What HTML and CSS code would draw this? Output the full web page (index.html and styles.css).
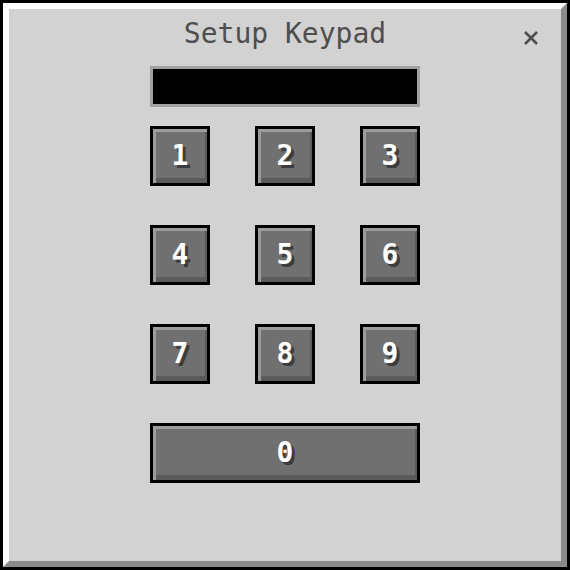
FILE: index.html
```html
<!DOCTYPE html>
<html lang="en">

<head>
    <meta charset="UTF-8">
    <meta name="viewport" content="width=device-width, initial-scale=1.0">
    <title>Setup Keypad</title>
    <link rel="stylesheet" href="styles.css">
</head>

<body>
    <div class="window">
        <div class="frame">
            <div class="header">
                <span></span>
                <h1 class="title">Setup Keypad</h1>
                <button class="close" aria-label="Close">
                    <svg width="16" height="16" viewBox="0 0 16 16">
                        <path d="M2 2 L14 14 M14 2 L2 14" stroke="#4e4e4e" stroke-width="2.6" fill="none" />
                    </svg>
                </button>
            </div>
            <div class="display"></div>
            <div class="keys">
                <button class="key">1</button>
                <button class="key">2</button>
                <button class="key">3</button>
                <button class="key">4</button>
                <button class="key">5</button>
                <button class="key">6</button>
                <button class="key">7</button>
                <button class="key">8</button>
                <button class="key">9</button>
                <button class="key wide">0</button>
            </div>
        </div>
    </div>
</body>

</html>
```

FILE: styles.css
```css
* {
    padding: 0;
    margin: 0;
    box-sizing: border-box;
}

html,
body {
    width: 100%;
    height: 100%;
    background: #fff;
}

.window {
    width: 570px;
    height: 570px;
    border: 3px solid #000;
}

.frame {
    height: 100%;
    display: flex;
    flex-direction: column;
    align-items: center;
    background-color: #d2d2d2;
    border-top: 6px solid #fff;
    border-left: 6px solid #fff;
    border-right: 6px solid #8b8b8b;
    border-bottom: 6px solid #8b8b8b;
}

.header {
    width: 100%;
    height: 57px;
    display: grid;
    grid-template-columns: 1fr auto 1fr;
    align-items: start;
    padding-top: 9px;
}

.title {
    font-family: "DejaVu Sans Mono", "Liberation Mono", monospace;
    font-weight: normal;
    font-size: 28px;
    line-height: 32px;
    color: #4e4e4e;
}

.close {
    justify-self: end;
    margin-right: 22px;
    margin-top: 12px;
    width: 16px;
    height: 16px;
    border: none;
    background: none;
    display: flex;
}

.display {
    width: 270px;
    height: 41px;
    background-color: #000;
    border: 3px solid #a0a0a0;
}

.keys {
    margin-top: 19px;
    display: grid;
    grid-template-columns: repeat(3, 60px);
    grid-auto-rows: 60px;
    column-gap: 45px;
    row-gap: 39px;
}

.key {
    border: 3px solid #000;
    background-color: #707070;
    box-shadow: inset 3px 3px 0 #9c9c9c, inset -2px -5px 0 #5b5b5b;
    font-family: "DejaVu Sans Mono", "Liberation Mono", monospace;
    font-weight: bold;
    font-size: 28px;
    color: #fff;
    text-shadow: 3px 3px 0 #3c3c3c;
    padding-bottom: 2px;
}

.key.wide {
    grid-column: 1 / 4;
}

button:focus,
button:active {
    outline: none;
}
```
